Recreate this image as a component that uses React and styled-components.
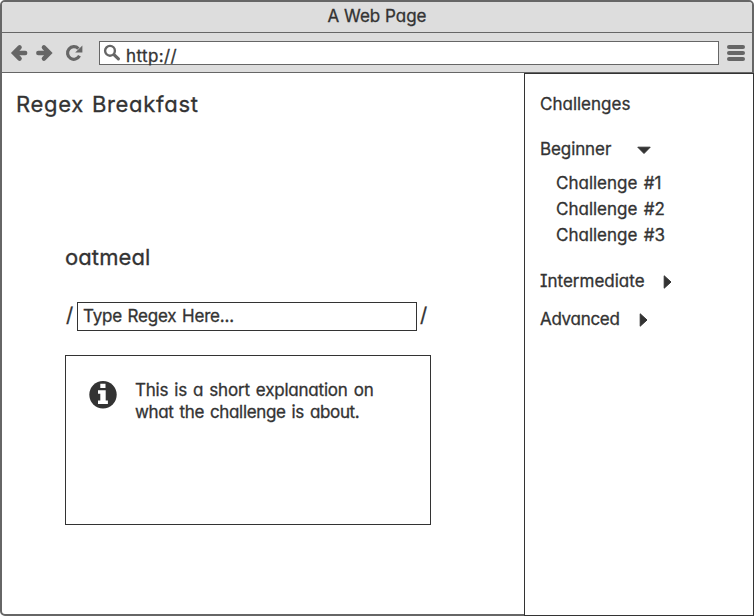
import React from 'react';
import styled, { createGlobalStyle } from 'styled-components';

const ink = '#333333';
const chrome = '#666666';
const bar = '#dddddd';

const GlobalStyle = createGlobalStyle`
  *, *::before, *::after { box-sizing: border-box; }
  body {
    margin: 0;
    background: #ffffff;
    color: ${ink};
    font-family: Inter, "Open Sans", sans-serif;
    font-size: 17px;
    font-weight: 400;
    font-feature-settings: "cv11", "cv08";
    -webkit-text-stroke: 0.3px ${ink};
  }
`;

const Window = styled.div`
  display: flex;
  flex-direction: column;
  width: 754px;
  height: 616px;
  border: 2px solid ${chrome};
  border-radius: 5px;
  background: #ffffff;
`;

const TitleBar = styled.header`
  display: flex;
  flex: none;
  justify-content: center;
  height: 31px;
  padding-top: 3px;
  line-height: 22px;
  background: ${bar};
  border-bottom: 1px solid ${chrome};
  border-radius: 3px 3px 0 0;
`;

const Toolbar = styled.div`
  display: flex;
  flex: none;
  align-items: flex-start;
  height: 40px;
  padding: 8px 6px 0 9px;
  background: ${bar};
  border-bottom: 1px solid ${chrome};
`;

const Icon = styled.svg`
  display: block;
  flex: none;
  overflow: visible;
  color: ${(p) => p.$color || ink};
`;

const NavIcons = styled.div`
  display: flex;
  flex: none;
  width: 88px;
  padding-top: 4px;
`;

const NavButton = styled.span`
  display: block;
  width: ${(p) => p.$width}px;
`;

const Address = styled.div`
  display: flex;
  flex: none;
  width: 620px;
  height: 24px;
  padding: 3px 0 0 4px;
  background: #ffffff;
  border: 1px solid ${chrome};
`;

const Url = styled.span`
  margin: 0 0 0 5px;
  line-height: 22px;
  letter-spacing: 0.4px;
`;

const MenuButton = styled.div`
  display: flex;
  flex: none;
  flex-direction: column;
  gap: 2px;
  width: 18px;
  margin: 4px 0 0 8px;
`;

const MenuLine = styled.span`
  height: 4px;
  border-radius: 2px;
  background: ${chrome};
`;

const Body = styled.div`
  display: flex;
  flex: 1;
  align-items: flex-start;
  min-height: 0;
`;

const Main = styled.main`
  flex: none;
  width: 522px;
  padding: 15px 0 0 14px;
`;

const Heading = styled.h1`
  margin: 0;
  font-size: 22px;
  font-weight: 400;
  line-height: 32px;
  letter-spacing: 0.7px;
  word-spacing: 1px;
`;

const Exercise = styled.section`
  width: 366px;
  margin: 121px 0 0 49px;
`;

const Subject = styled.h2`
  margin: 0;
  font-size: 22px;
  font-weight: 400;
  line-height: 32px;
  letter-spacing: 0.1px;
`;

const RegexRow = styled.div`
  display: flex;
  height: 29px;
  margin-top: 29px;
`;

const Slash = styled.span`
  flex: none;
  width: 12px;
  margin-left: ${(p) => p.$gap || 0}px;
  padding-left: 1px;
  font-size: 20px;
  line-height: 26px;
`;

const RegexField = styled.div`
  flex: none;
  width: 340px;
  padding-left: 5px;
  border: 1px solid ${ink};
  line-height: 27px;
  letter-spacing: -0.2px;
  word-spacing: 1px;
`;

const InfoPanel = styled.div`
  display: flex;
  align-items: flex-start;
  height: 170px;
  margin-top: 24px;
  padding: 25px 0 0 23px;
  border: 1px solid ${ink};
`;

const Explanation = styled.p`
  margin: -2px 0 0 18px;
  line-height: 22px;
  white-space: nowrap;
  word-spacing: 1.5px;
`;

const Line = styled.span`
  display: block;
  letter-spacing: ${(p) => p.$spacing || 0}px;
`;

const Sidebar = styled.aside`
  flex: none;
  width: 230px;
  height: 543px;
  padding: 18px 0 0 15px;
  border: 1px solid ${ink};
  background: #ffffff;
`;

const SidebarTitle = styled.div`
  line-height: 24px;
`;

const Group = styled.div`
  display: flex;
  align-items: center;
  height: 24px;
  margin-top: ${(p) => p.$top}px;
`;

const GroupName = styled.span`
  width: ${(p) => p.$width}px;
  letter-spacing: ${(p) => p.$spacing || 0}px;
`;

const Marker = styled.span`
  display: block;
  padding-top: 2px;
`;

const ChallengeList = styled.ul`
  margin: 9px 0 0 16px;
  padding: 0;
  list-style: none;
  line-height: 26px;
  word-spacing: 1.5px;
`;

const BackArrow = () => (
  <Icon width="17" height="16" viewBox="0 0 17 16" $color={chrome}>
    <path d="M8.6 2.4 3 8l5.6 5.6M3.5 8h10.7" fill="none" stroke="currentColor" strokeWidth="4.4" strokeLinejoin="miter" strokeLinecap="round" />
  </Icon>
);

const ForwardArrow = () => (
  <Icon width="17" height="16" viewBox="0 0 17 16" $color={chrome}>
    <path d="m7.9 2.4 5.6 5.6-5.6 5.6M13 8H2.3" fill="none" stroke="currentColor" strokeWidth="4.4" strokeLinejoin="miter" strokeLinecap="round" />
  </Icon>
);

const Reload = () => (
  <Icon width="17" height="16" viewBox="0 0 17 16" $color={chrome}>
    <path d="M12.4 3.6A6.3 6.3 0 1 0 13.5 10.8" fill="none" stroke="currentColor" strokeWidth="3.2" />
    <path d="M16.4.6v7H9.2z" fill="currentColor" />
  </Icon>
);

const Search = () => (
  <Icon width="17" height="16" viewBox="0 0 17 16" $color={chrome}>
    <circle cx="6" cy="5.8" r="4.9" fill="none" stroke="currentColor" strokeWidth="2.4" />
    <path d="m10.2 9.8 4.2 4.1" stroke="currentColor" strokeWidth="3.2" strokeLinecap="round" />
  </Icon>
);

const Info = () => (
  <Icon width="28" height="28" viewBox="0 0 28 28">
    <circle cx="14" cy="13.7" r="13.7" fill="currentColor" />
    <path d="M11.3 2.8h5.2v4.2h-5.2zM9 9.2h7.7v10.2h2.2v3.5H9v-3.5h2.3v-6.7H9z" fill="#ffffff" />
  </Icon>
);

const Expanded = () => (
  <Icon width="14" height="8" viewBox="0 0 14 8">
    <path d="M.8 1.2h12.4L7 7.5z" fill="currentColor" stroke="currentColor" strokeLinejoin="round" />
  </Icon>
);

const Collapsed = () => (
  <Icon width="9" height="14" viewBox="0 0 9 14">
    <path d="M1.2.8v12.4L8 7z" fill="currentColor" stroke="currentColor" strokeLinejoin="round" />
  </Icon>
);

export default function App() {
  return (
    <>
      <GlobalStyle />
      <Window>
        <TitleBar>A Web Page</TitleBar>
        <Toolbar>
          <NavIcons>
            <NavButton $width={25}><BackArrow /></NavButton>
            <NavButton $width={30}><ForwardArrow /></NavButton>
            <NavButton $width={17}><Reload /></NavButton>
          </NavIcons>
          <Address>
            <Search />
            <Url>http://</Url>
          </Address>
          <MenuButton>
            <MenuLine />
            <MenuLine />
            <MenuLine />
          </MenuButton>
        </Toolbar>
        <Body>
          <Main>
            <Heading>Regex Breakfast</Heading>
            <Exercise>
              <Subject>oatmeal</Subject>
              <RegexRow>
                <Slash>/</Slash>
                <RegexField>Type Regex Here...</RegexField>
                <Slash $gap={2}>/</Slash>
              </RegexRow>
              <InfoPanel>
                <Info />
                <Explanation>
                  <Line $spacing={-0.21}>This is a short explanation on</Line>
                  <Line $spacing={-0.34}>what the challenge is about.</Line>
                </Explanation>
              </InfoPanel>
            </Exercise>
          </Main>
          <Sidebar>
            <SidebarTitle>Challenges</SidebarTitle>
            <Group $top={21}>
              <GroupName $width={97} $spacing={-0.1}>Beginner</GroupName>
              <Marker><Expanded /></Marker>
            </Group>
            <ChallengeList>
              <li>Challenge #1</li>
              <li>Challenge #2</li>
              <li>Challenge #3</li>
            </ChallengeList>
            <Group $top={21}>
              <GroupName $width={123}>Intermediate</GroupName>
              <Marker><Collapsed /></Marker>
            </Group>
            <Group $top={14}>
              <GroupName $width={99} $spacing={-0.3}>Advanced</GroupName>
              <Marker><Collapsed /></Marker>
            </Group>
          </Sidebar>
        </Body>
      </Window>
    </>
  );
}
